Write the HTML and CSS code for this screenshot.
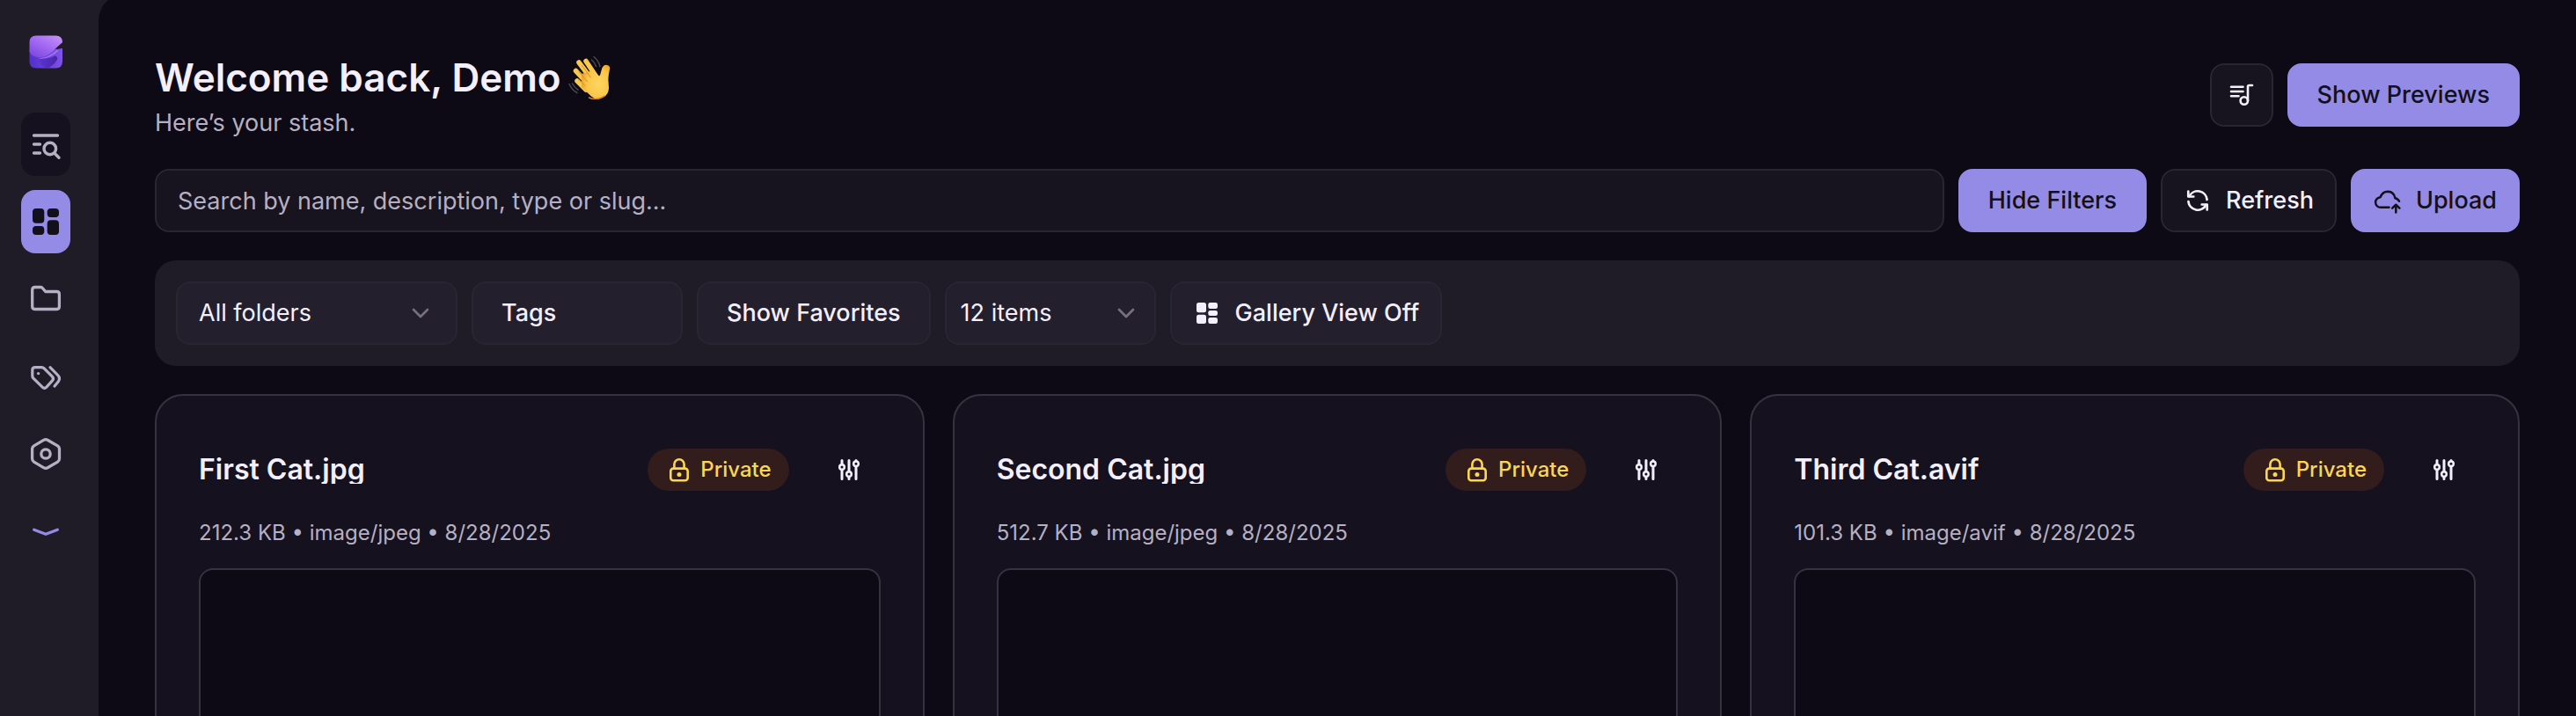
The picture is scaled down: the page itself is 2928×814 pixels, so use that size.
FILE: index.html
```html
<!DOCTYPE html>
<html lang="en">
<head>
<meta charset="utf-8">
<meta name="viewport" content="width=device-width, initial-scale=1">
<title>Dashboard</title>
<link rel="stylesheet" href="styles.css">
</head>
<body>
<svg class="sprite" aria-hidden="true">
  <symbol id="i-chevron" viewBox="0 0 24 24"><path d="M4 8l8 8 8-8" fill="none" stroke="currentColor" stroke-width="2.6" stroke-linecap="round" stroke-linejoin="round"/></symbol>
  <symbol id="i-lock" viewBox="0 0 32 32"><g fill="none" stroke="currentColor" stroke-width="2.6"><rect x="6.3" y="14.6" width="19.4" height="13.6" rx="3"/><path d="M10.4 14.6V9.8a5.6 5.6 0 0 1 11.2 0v4.8"/></g><circle cx="16" cy="21.4" r="2.5" fill="currentColor"/></symbol>
  <symbol id="i-sliders" viewBox="0 0 32 32"><g fill="none" stroke="currentColor" stroke-width="3" stroke-linecap="round"><path d="M8 5.5v4M8 16.5v10M16 5.5v12M16 24.5v2M24 12.5v14M24 5.5v0"/></g><g fill="none" stroke="currentColor" stroke-width="2.5"><circle cx="8" cy="13" r="2.8"/><circle cx="16" cy="21" r="2.8"/><circle cx="24" cy="9.2" r="2.8"/></g></symbol>
</svg>

<div class="app">
  <aside class="sidebar">
    <a class="logo" href="#" aria-label="Home">
      <svg viewBox="0 0 37 37">
        <defs>
          <linearGradient id="top" x1="1" y1="0" x2="0.2" y2="1"><stop offset="0" stop-color="#c795f6"/><stop offset="0.5" stop-color="#a56cf3"/><stop offset="1" stop-color="#7f49e2"/></linearGradient>
          <linearGradient id="base" x1="0" y1="0.6" x2="1" y2="0.5"><stop offset="0" stop-color="#5230cc"/><stop offset="1" stop-color="#8052e6"/></linearGradient>
          <linearGradient id="fold" x1="0" y1="0" x2="1" y2="0"><stop offset="0" stop-color="#5a35d2"/><stop offset="1" stop-color="#4a25a6"/></linearGradient>
        </defs>
        <path d="M0.5 15H30L37 14.5V29q0 7.5-7.5 7.5H8Q0.5 36.5 0.5 29z" fill="url(#base)"/>
        <path d="M10 26q11 1.500 18.500-3 4.500 1 2 5-3.500 6-10.500 8.500Q13 35 10 26z" fill="url(#fold)"/>
        <path d="M10 25.500Q22 25 31 16l1.500 1.500Q25 25 14 26z" fill="#9d74f0"/>
        <path d="M8 0.500h21.500Q37 0.500 37 8L29.500 14.500Q20 25 10 24.500 2 23.500 0.500 18V8Q0.500 0.500 8 0.500z" fill="url(#top)"/>
        <path d="M37 8.200V14.300L29.500 15.500z" fill="#1f1b27"/>
      </svg>
    </a>
    <nav class="nav" aria-label="Main">
      <button class="nav-item nav-search" aria-label="Search"><svg viewBox="0 0 40 40" fill="none" stroke="currentColor" stroke-width="3.4" stroke-linecap="round"><path d="M6.5 10h27M6.5 20h7M6.5 30h7"/><circle cx="24.8" cy="25" r="6.8"/><path d="M30 30.200l5 5"/></svg></button>
      <a class="nav-item nav-current" href="#" aria-label="Dashboard" aria-current="page"><svg viewBox="0 0 40 40" fill="currentColor"><rect x="5" y="5" width="13.3" height="16.7" rx="4"/><rect x="21.7" y="5" width="13.3" height="10" rx="4"/><rect x="5" y="25" width="13.3" height="10" rx="4"/><rect x="21.7" y="18.3" width="13.3" height="16.7" rx="4"/></svg></a>
      <a class="nav-item" href="#" aria-label="Folders"><svg viewBox="0 0 40 40" fill="none" stroke="currentColor" stroke-width="3.3" stroke-linejoin="round"><path d="M8 6.500h6.200q1.100 0 1.900.800l3.600 4.200H32.500q2.900 0 2.900 2.900v14.200q0 2.900-2.900 2.900H7.600q-2.900 0-2.900-2.900V9.400q0-2.900 3.300-2.900z"/></svg></a>
      <a class="nav-item" href="#" aria-label="Tags"><svg viewBox="0 0 40 40" fill="none" stroke="currentColor" stroke-width="3.2" stroke-linecap="round" stroke-linejoin="round"><path d="M8 9.700h7.200q1.800 0 3 1.200l9.200 9.200q2.200 2.400 0 4.800l-6.600 7.200q-2.300 2.200-4.600 0L6 22.200q-1.200-1.200-1.200-3V12.700q0-3 3.200-3z"/><path d="M25 9.700l8.700 8.800q3.300 3.600.600 7.200L30 31"/><circle cx="11.6" cy="16.6" r="1.7" fill="currentColor" stroke="none"/></svg></a>
      <a class="nav-item" href="#" aria-label="Settings"><svg viewBox="0 0 40 40" fill="none" stroke="currentColor" stroke-width="3.3"><path d="M17.900 4.200q2.100-1.100 4.200 0l11.400 6.600q2 1.300 2 3.600v11.200q0 2.300-2 3.600l-11.400 6.600q-2.100 1.100-4.200 0L6.600 29.200q-2-1.300-2-3.600V14.400q0-2.300 2-3.600z"/><circle cx="20" cy="20" r="5.2"/></svg></a>
      <button class="nav-item nav-more" aria-label="More"><svg viewBox="0 0 40 40" fill="none" stroke="currentColor" stroke-width="3.3" stroke-linecap="round" stroke-linejoin="round"><path d="M6.700 18.300L20 23.300l13.300-5"/></svg></button>
    </nav>
  </aside>

  <main class="main">
    <header class="header">
      <div class="greeting">
        <h1 class="title">Welcome back, Demo
          <svg class="wave" viewBox="0 0 48 50" role="img" aria-label="waving hand">
            <defs><radialGradient id="skin" cx="0.6" cy="0.55" r="0.6"><stop offset="0" stop-color="#fdd561"/><stop offset="0.7" stop-color="#fac748"/><stop offset="1" stop-color="#eda62f"/></radialGradient></defs>
            <g fill="none" stroke="#fac94c" stroke-width="5.5" stroke-linecap="round"><path d="M20 6.500l12 18"/><path d="M12 8l15 20"/><path d="M8.500 17.500l15 16"/><path d="M10 29l10 10"/></g>
            <path d="M15 21L28 17l7 6.500q1.500-1 2-4.500l1.500-5q2-4 5.500-3 4 1 3 5-2 8-1.500 13l.500 8q0 7-6 10.500-8 4.500-14-1L15 36z" fill="url(#skin)"/>
            <path d="M15.500 11.500l10 13.500M11.500 18l10.500 12M12 27.500l7 7" fill="none" stroke="#d98d27" stroke-width="1" stroke-linecap="round"/>
            <path d="M23.500 48q9 4 17.500-2" fill="none" stroke="#d5862a" stroke-width="1.5" stroke-linecap="round"/>
            <path d="M29 1.500q5 4 7 11M26.500 5q3.500 3 5 7.500M1 32.500q3 7 9 10M4.500 32q2.500 4.500 6.500 7" fill="none" stroke="#4a4850" stroke-width="1.5" stroke-linecap="round"/>
          </svg>
        </h1>
        <p class="subtitle">Here’s your stash.</p>
      </div>
      <div class="actions">
        <button class="btn btn-icon" aria-label="Playlist"><svg class="icon" viewBox="0 0 32 32" fill="none" stroke="currentColor" stroke-width="2.6" stroke-linecap="round"><path d="M4 6.700h13.500M4 12h13.500M4 17.300h8.500"/><path d="M23 22.500V6.500q0-1.500 1.500-1.500h3.500"/><circle cx="18.8" cy="22.5" r="4.2"/></svg></button>
        <button class="btn btn-primary">Show Previews</button>
      </div>
    </header>

    <div class="toolbar">
      <input class="search" type="text" aria-label="Search files" placeholder="Search by name, description, type or slug...">
      <button class="btn btn-primary">Hide Filters</button>
      <button class="btn btn-with-icon"><svg class="icon" viewBox="0 0 32 32" fill="none" stroke="currentColor" stroke-width="2.7" stroke-linecap="round" stroke-linejoin="round"><path d="M6.500 11A10.700 10.700 0 0 1 26.600 15"/><path d="M5.300 5.500v6h6"/><path d="M5.400 17A10.700 10.700 0 0 0 25.500 21"/><path d="M26.700 26.500v-6h-6"/></svg>Refresh</button>
      <button class="btn btn-primary btn-with-icon"><svg class="icon" viewBox="0 0 32 32" fill="none" stroke="currentColor" stroke-width="2.5" stroke-linecap="round" stroke-linejoin="round"><path d="M17.500 23.800H8.200a5.800 5.800 0 0 1-.600-11.600Q10 5.700 16.200 5.700q6.800.200 8.200 7.500 3.200.600 4.600 3.600"/><path d="M25.300 29.500v-8.500M21.200 24.700l4.100-4 4.100 4"/></svg>Upload</button>
    </div>

    <section class="filters" aria-label="Filters">
      <div class="picker picker-wide">
        <select class="select" aria-label="Folder"><option>All folders</option></select>
        <svg class="chevron"><use href="#i-chevron"/></svg>
      </div>
      <button class="btn btn-soft btn-tags">Tags</button>
      <button class="btn btn-soft">Show Favorites</button>
      <div class="picker">
        <select class="select select-tight" aria-label="Items per page"><option>12 items</option></select>
        <svg class="chevron"><use href="#i-chevron"/></svg>
      </div>
      <button class="btn btn-soft btn-with-icon"><svg class="icon" viewBox="0 0 32 32" fill="currentColor"><rect x="4" y="4" width="11" height="11.2" rx="2.5"/><rect x="4" y="17.8" width="11" height="10.2" rx="2.5"/><rect x="17.3" y="4" width="10.7" height="7" rx="2.3"/><rect x="17.3" y="13" width="10.7" height="6" rx="2.3"/><rect x="17.3" y="21" width="10.7" height="7" rx="2.3"/></svg>Gallery View Off</button>
    </section>

    <section class="grid" aria-label="Files">
      <article class="card">
        <div class="card-head">
          <h2 class="card-title">First Cat.jpg</h2>
          <span class="badge"><svg class="icon"><use href="#i-lock"/></svg>Private</span>
          <button class="card-menu" aria-label="Options"><svg class="icon"><use href="#i-sliders"/></svg></button>
        </div>
        <p class="meta">212.3 KB • image/jpeg • 8/28/2025</p>
        <div class="preview"></div>
      </article>
      <article class="card">
        <div class="card-head">
          <h2 class="card-title">Second Cat.jpg</h2>
          <span class="badge"><svg class="icon"><use href="#i-lock"/></svg>Private</span>
          <button class="card-menu" aria-label="Options"><svg class="icon"><use href="#i-sliders"/></svg></button>
        </div>
        <p class="meta">512.7 KB • image/jpeg • 8/28/2025</p>
        <div class="preview"></div>
      </article>
      <article class="card">
        <div class="card-head">
          <h2 class="card-title">Third Cat.avif</h2>
          <span class="badge"><svg class="icon"><use href="#i-lock"/></svg>Private</span>
          <button class="card-menu" aria-label="Options"><svg class="icon"><use href="#i-sliders"/></svg></button>
        </div>
        <p class="meta">101.3 KB • image/avif • 8/28/2025</p>
        <div class="preview"></div>
      </article>
    </section>
  </main>
</div>
</body>
</html>
```
FILE: styles.css
```css
:root {
  --bg: #0d0a16;
  --card: #16111e;
  --field: #18141f;
  --panel: #1f1b27;
  --soft: #231f2c;
  --line: #292532;
  --line-strong: #37323f;
  --text: #f4effd;
  --muted: #b5b0c3;
  --accent: #938be6;
  --ink: #13101c;
}

* {
  box-sizing: border-box;
}

body {
  margin: 0;
  height: 100vh;
  overflow: hidden;
  background: var(--panel);
  color: var(--text);
  font-family: Inter, "Liberation Sans", sans-serif;
  font-size: 27px;
  line-height: 40px;
}

button,
input,
select {
  font: inherit;
  color: inherit;
}

button {
  cursor: pointer;
}

h1,
h2,
p {
  margin: 0;
}

svg {
  display: block;
  flex: none;
}

.sprite {
  position: absolute;
  width: 0;
  height: 0;
}

.app {
  display: flex;
  height: 100%;
}

/* Sidebar */
.sidebar {
  flex: none;
  width: 112px;
  padding: 40px 32px 24px 24px;
}

.logo svg {
  width: 38px;
  height: 38px;
  margin: 0 auto;
}

.nav {
  display: flex;
  flex-direction: column;
  gap: 16px;
  margin-top: 50px;
}

.nav-item {
  display: flex;
  align-items: center;
  justify-content: center;
  height: 72px;
  padding: 0;
  border: 0;
  border-radius: 16px;
  background: none;
  color: var(--muted);
}

.nav-item svg {
  width: 40px;
  height: 40px;
}

.nav-search {
  background: var(--card);
}

.nav-current {
  background: var(--accent);
  color: var(--ink);
}

.nav-more {
  color: var(--accent);
}

/* Main column */
.main {
  flex: 1;
  min-width: 0;
  margin-top: -8px;
  padding: 64px 64px 0;
  border-top-left-radius: 32px;
  background: var(--bg);
  overflow: hidden;
}

.header {
  display: flex;
  align-items: center;
  justify-content: space-between;
}

.title {
  display: flex;
  align-items: center;
  gap: 8px;
  font-size: 44px;
  font-weight: 600;
  line-height: 64px;
}

.wave {
  width: 48px;
  height: 50px;
}

.subtitle {
  color: var(--muted);
}

.actions,
.toolbar {
  display: flex;
  gap: 16px;
}

.toolbar {
  margin-top: 32px;
}

.btn {
  display: flex;
  align-items: center;
  justify-content: center;
  flex: none;
  height: 72px;
  padding: 0 32px;
  border: 2px solid var(--line);
  border-radius: 16px;
  background: var(--field);
  font-weight: 500;
  white-space: nowrap;
}

.btn-primary {
  border-color: var(--accent);
  background: var(--accent);
  color: var(--ink);
}

.btn-icon {
  width: 72px;
  padding: 0;
}

.btn-with-icon {
  gap: 16px;
  padding: 0 24px;
}

.btn-soft {
  background: var(--soft);
}

.btn-tags {
  width: 240px;
  justify-content: flex-start;
}

.icon {
  width: 32px;
  height: 32px;
}

.search {
  flex: 1;
  min-width: 0;
  height: 72px;
  padding: 0 24px;
  border: 2px solid var(--line);
  border-radius: 16px;
  background: var(--field);
}

.search::placeholder {
  color: var(--muted);
  opacity: 1;
}

/* Filters */
.filters {
  display: flex;
  gap: 16px;
  margin-top: 32px;
  padding: 24px;
  border-radius: 24px;
  background: var(--panel);
}

.picker {
  display: grid;
  align-items: center;
  width: 240px;
}

.picker-wide {
  width: 320px;
}

.select {
  grid-area: 1 / 1;
  width: 100%;
  height: 72px;
  padding: 0 24px;
  border: 2px solid var(--line);
  border-radius: 16px;
  background: var(--soft);
  appearance: none;
}

.select-tight {
  padding: 0 16px;
}

.chevron {
  grid-area: 1 / 1;
  justify-self: end;
  width: 24px;
  height: 24px;
  margin-right: 30px;
  color: #77717f;
  pointer-events: none;
}

.picker:not(.picker-wide) .chevron {
  margin-right: 22px;
}

/* Cards */
.grid {
  display: grid;
  grid-template-columns: repeat(3, minmax(0, 1fr));
  gap: 32px;
  margin-top: 32px;
}

.card {
  padding: 48px;
  border: 2px solid var(--line-strong);
  border-radius: 32px;
  background: var(--card);
}

.card-head {
  display: flex;
  align-items: center;
  gap: 32px;
}

.card-title {
  flex: 1;
  min-width: 0;
  overflow: hidden;
  font-size: 32px;
  font-weight: 600;
  line-height: 32px;
  text-overflow: ellipsis;
  white-space: nowrap;
}

.badge {
  display: flex;
  align-items: center;
  gap: 8px;
  height: 48px;
  padding: 0 20px;
  border-radius: 24px;
  background: #321c1c;
  color: #fbd650;
  font-size: 24px;
  font-weight: 500;
}

.card-menu {
  display: flex;
  align-items: center;
  justify-content: center;
  width: 72px;
  height: 72px;
  padding: 0;
  border: 0;
  background: none;
}

.meta {
  margin-top: 20px;
  color: var(--muted);
  font-size: 24px;
  line-height: 32px;
}

.preview {
  margin-top: 24px;
  aspect-ratio: 16 / 9;
  border: 2px solid var(--line-strong);
  border-radius: 16px;
  background: var(--bg);
}
```
